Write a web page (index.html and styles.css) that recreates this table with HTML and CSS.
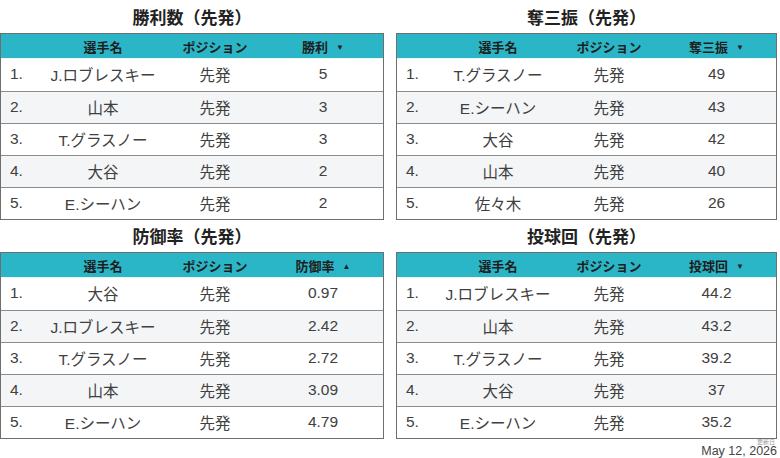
FILE: index.html
```html
<!DOCTYPE html>
<html lang="ja">
<head>
<meta charset="utf-8">
<link rel="stylesheet" href="styles.css">
</head>
<body>
<div class="page">
  <div class="grid">
    <section class="panel">
      <h2 class="title">勝利数（先発）</h2>
      <div class="table">
        <div class="row head"><span></span><span>選手名</span><span>ポジション</span><span>勝利<i class="arrow">▼</i></span></div>
        <div class="row"><span class="rank">1.</span><span>J.ロブレスキー</span><span>先発</span><span>5</span></div>
        <div class="row alt"><span class="rank">2.</span><span>山本</span><span>先発</span><span>3</span></div>
        <div class="row"><span class="rank">3.</span><span>T.グラスノー</span><span>先発</span><span>3</span></div>
        <div class="row alt"><span class="rank">4.</span><span>大谷</span><span>先発</span><span>2</span></div>
        <div class="row"><span class="rank">5.</span><span>E.シーハン</span><span>先発</span><span>2</span></div>
      </div>
    </section>
    <section class="panel">
      <h2 class="title">奪三振（先発）</h2>
      <div class="table">
        <div class="row head"><span></span><span>選手名</span><span>ポジション</span><span>奪三振<i class="arrow">▼</i></span></div>
        <div class="row"><span class="rank">1.</span><span>T.グラスノー</span><span>先発</span><span>49</span></div>
        <div class="row alt"><span class="rank">2.</span><span>E.シーハン</span><span>先発</span><span>43</span></div>
        <div class="row"><span class="rank">3.</span><span>大谷</span><span>先発</span><span>42</span></div>
        <div class="row alt"><span class="rank">4.</span><span>山本</span><span>先発</span><span>40</span></div>
        <div class="row"><span class="rank">5.</span><span>佐々木</span><span>先発</span><span>26</span></div>
      </div>
    </section>
    <section class="panel">
      <h2 class="title">防御率（先発）</h2>
      <div class="table">
        <div class="row head"><span></span><span>選手名</span><span>ポジション</span><span>防御率<i class="arrow">▲</i></span></div>
        <div class="row"><span class="rank">1.</span><span>大谷</span><span>先発</span><span>0.97</span></div>
        <div class="row alt"><span class="rank">2.</span><span>J.ロブレスキー</span><span>先発</span><span>2.42</span></div>
        <div class="row"><span class="rank">3.</span><span>T.グラスノー</span><span>先発</span><span>2.72</span></div>
        <div class="row alt"><span class="rank">4.</span><span>山本</span><span>先発</span><span>3.09</span></div>
        <div class="row"><span class="rank">5.</span><span>E.シーハン</span><span>先発</span><span>4.79</span></div>
      </div>
    </section>
    <section class="panel">
      <h2 class="title">投球回（先発）</h2>
      <div class="table">
        <div class="row head"><span></span><span>選手名</span><span>ポジション</span><span>投球回<i class="arrow">▼</i></span></div>
        <div class="row"><span class="rank">1.</span><span>J.ロブレスキー</span><span>先発</span><span>44.2</span></div>
        <div class="row alt"><span class="rank">2.</span><span>山本</span><span>先発</span><span>43.2</span></div>
        <div class="row"><span class="rank">3.</span><span>T.グラスノー</span><span>先発</span><span>39.2</span></div>
        <div class="row alt"><span class="rank">4.</span><span>大谷</span><span>先発</span><span>37</span></div>
        <div class="row"><span class="rank">5.</span><span>E.シーハン</span><span>先発</span><span>35.2</span></div>
      </div>
    </section>
  </div>
  <div class="footer">
    <div class="updated-label">更新日</div>
    <div class="updated-date">May 12, 2026</div>
  </div>
</div>
</body>
</html>
```

FILE: styles.css
```css
* { box-sizing: border-box; }
html, body { margin: 0; padding: 0; background: #ffffff; }
body {
  font-family: "Liberation Sans", "Noto Sans CJK JP", sans-serif;
  color: #404040;
}
.page { width: 780px; height: 458px; overflow: hidden; }
.grid {
  display: grid;
  grid-template-columns: 384px 381px;
  column-gap: 12px;
}
.title {
  margin: 0;
  height: 33px;
  display: flex;
  align-items: center;
  justify-content: center;
  font-size: 17px;
  font-weight: bold;
  color: #222222;
  padding-bottom: 1px;
}
.panel:nth-child(3) .title,
.panel:nth-child(4) .title { height: 32px; }
.table {
  border: 1px solid #6e6e6e;
}
.row {
  display: grid;
  grid-template-columns: 38px 128px 96px 1fr;
  height: 32px;
  align-items: center;
  font-size: 15.5px;
  border-top: 1px solid #8c8c8c;
  background: #ffffff;
  padding-bottom: 2px;
}
.panel:nth-child(2) .row,
.panel:nth-child(4) .row { grid-template-columns: 38px 126px 96px 1fr; }
.row > span { text-align: center; white-space: nowrap; }
.row > span.rank { text-align: left; padding-left: 9px; }
.row.alt { background: #f4f5f7; }
.row.head {
  height: 25px;
  border-top: none;
  background: #2bb6c8;
  color: #1e1e1e;
  font-size: 13px;
  font-weight: bold;
  border-bottom: 1px solid #e8f6f8;
  padding-bottom: 0;
}
.row.head + .row { border-top: none; }
.arrow {
  font-style: normal;
  font-size: 8px;
  margin-left: 8px;
  vertical-align: 2px;
}
.footer {
  width: 777px;
  text-align: right;
}
.updated-label {
  font-size: 6px;
  color: #9a9a9a;
  line-height: 6px;
  padding-right: 2px;
}
.updated-date {
  font-size: 12.5px;
  color: #444444;
  line-height: 13px;
}
```
